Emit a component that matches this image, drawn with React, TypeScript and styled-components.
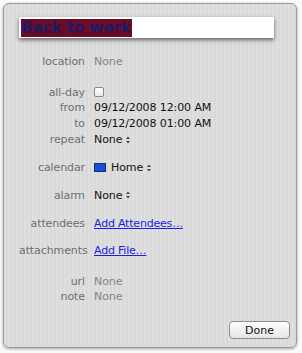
import React from "react";
import styled, { createGlobalStyle } from "styled-components";

const Global = createGlobalStyle`
  html, body { margin: 0; padding: 0; background: #f4f4f4; }
  body { font-family: "DejaVu Sans", "Liberation Sans", sans-serif; }
`;

const Page = styled.div`
  width: 302px;
  height: 353px;
  padding: 3px;
  box-sizing: border-box;
  background: #fafafa;
`;

const Panel = styled.div`
  width: 294px;
  height: 345px;
  box-sizing: border-box;
  border: 1px solid #9a9a9a;
  border-radius: 6px;
  background: repeating-linear-gradient(90deg, #dfdfdf 0 2px, #d9d9d9 2px 4px);
  box-shadow: 0 1px 3px rgba(0, 0, 0, 0.35);
  padding: 13px 15px 0 15px;
  display: flex;
  flex-direction: column;
`;

const TitleBox = styled.div`
  width: 255px;
  height: 21px;
  background: #fff;
  box-shadow: 0 2px 4px rgba(0, 0, 0, 0.55);
  display: flex;
  align-items: center;
  padding-left: 2px;
  box-sizing: border-box;
`;

const Selected = styled.span`
  background: #6e0a25;
  color: #1b1b66;
  font-weight: bold;
  font-size: 15px;
  line-height: 18px;
  height: 18px;
  padding-right: 1px;
`;

const Form = styled.div`
  display: flex;
  flex-direction: column;
  margin-top: 16px;
`;

const Group = styled.div<{ $gap: number }>`
  display: flex;
  flex-direction: column;
  margin-top: ${(p) => p.$gap}px;
`;

const Row = styled.div<{ $h?: number }>`
  display: grid;
  grid-template-columns: 66px auto;
  column-gap: 9px;
  align-items: center;
  height: ${(p) => p.$h ?? 15.5}px;
  font-size: 11px;
`;

const Label = styled.span`
  text-align: right;
  color: #6f6f6f;
  white-space: nowrap;
  letter-spacing: -0.1px;
`;

const Value = styled.span<{ $muted?: boolean }>`
  color: ${(p) => (p.$muted ? "#858585" : "#111")};
  display: flex;
  align-items: center;
  white-space: nowrap;
  letter-spacing: -0.1px;
`;

const Link = styled.a`
  color: #1c1ce0;
  text-decoration: underline;
  letter-spacing: -0.2px;
`;

const Check = styled.span`
  display: inline-block;
  width: 8px;
  height: 8px;
  border: 1px solid #8a8a8a;
  border-radius: 2px;
  background: linear-gradient(#fff, #eaeaea);
`;

const Swatch = styled.span`
  display: inline-block;
  width: 10px;
  height: 7px;
  background: #1550e0;
  border: 1px solid #1a2a70;
  margin-right: 5px;
`;

const Footer = styled.div`
  flex: 1;
  display: flex;
  justify-content: flex-end;
  align-items: flex-end;
  padding-bottom: 8px;
  margin-right: -9px;
`;

const DoneButton = styled.button`
  width: 61px;
  height: 18px;
  border: 1px solid #8d8d8d;
  border-radius: 4px;
  background: linear-gradient(#ffffff, #f2f2f2 50%, #e6e6e6);
  font-family: "DejaVu Sans", sans-serif;
  font-size: 11px;
  color: #111;
  padding: 0;
`;

const Arrows = () => (
  <svg width="6" height="10" viewBox="0 0 6 10" style={{ marginLeft: 3 }}>
    <path d="M3 1.5 L5 4 L1 4 Z" fill="#444" />
    <path d="M3 8.5 L5 6 L1 6 Z" fill="#444" />
  </svg>
);

export default function App() {
  return (
    <>
      <Global />
      <Page>
        <Panel>
          <TitleBox>
            <Selected>Back to work</Selected>
          </TitleBox>
          <Form>
            <Row>
              <Label>location</Label>
              <Value $muted>None</Value>
            </Row>
            <Group $gap={15}>
              <Row>
                <Label>all-day</Label>
                <Value>
                  <Check />
                </Value>
              </Row>
              <Row>
                <Label>from</Label>
                <Value>09/12/2008 12:00 AM</Value>
              </Row>
              <Row>
                <Label>to</Label>
                <Value>09/12/2008 01:00 AM</Value>
              </Row>
              <Row $h={17}>
                <Label>repeat</Label>
                <Value>
                  None
                  <Arrows />
                </Value>
              </Row>
            </Group>
            <Group $gap={12}>
              <Row>
                <Label>calendar</Label>
                <Value>
                  <Swatch />
                  Home
                  <Arrows />
                </Value>
              </Row>
            </Group>
            <Group $gap={12}>
              <Row>
                <Label>alarm</Label>
                <Value>
                  None
                  <Arrows />
                </Value>
              </Row>
            </Group>
            <Group $gap={12.5}>
              <Row>
                <Label>attendees</Label>
                <Value>
                  <Link href="#">Add Attendees…</Link>
                </Value>
              </Row>
            </Group>
            <Group $gap={11.5}>
              <Row>
                <Label>attachments</Label>
                <Value>
                  <Link href="#">Add File…</Link>
                </Value>
              </Row>
            </Group>
            <Group $gap={15.5}>
              <Row>
                <Label>url</Label>
                <Value $muted>None</Value>
              </Row>
              <Row>
                <Label>note</Label>
                <Value $muted>None</Value>
              </Row>
            </Group>
          </Form>
          <Footer>
            <DoneButton>Done</DoneButton>
          </Footer>
        </Panel>
      </Page>
    </>
  );
}
